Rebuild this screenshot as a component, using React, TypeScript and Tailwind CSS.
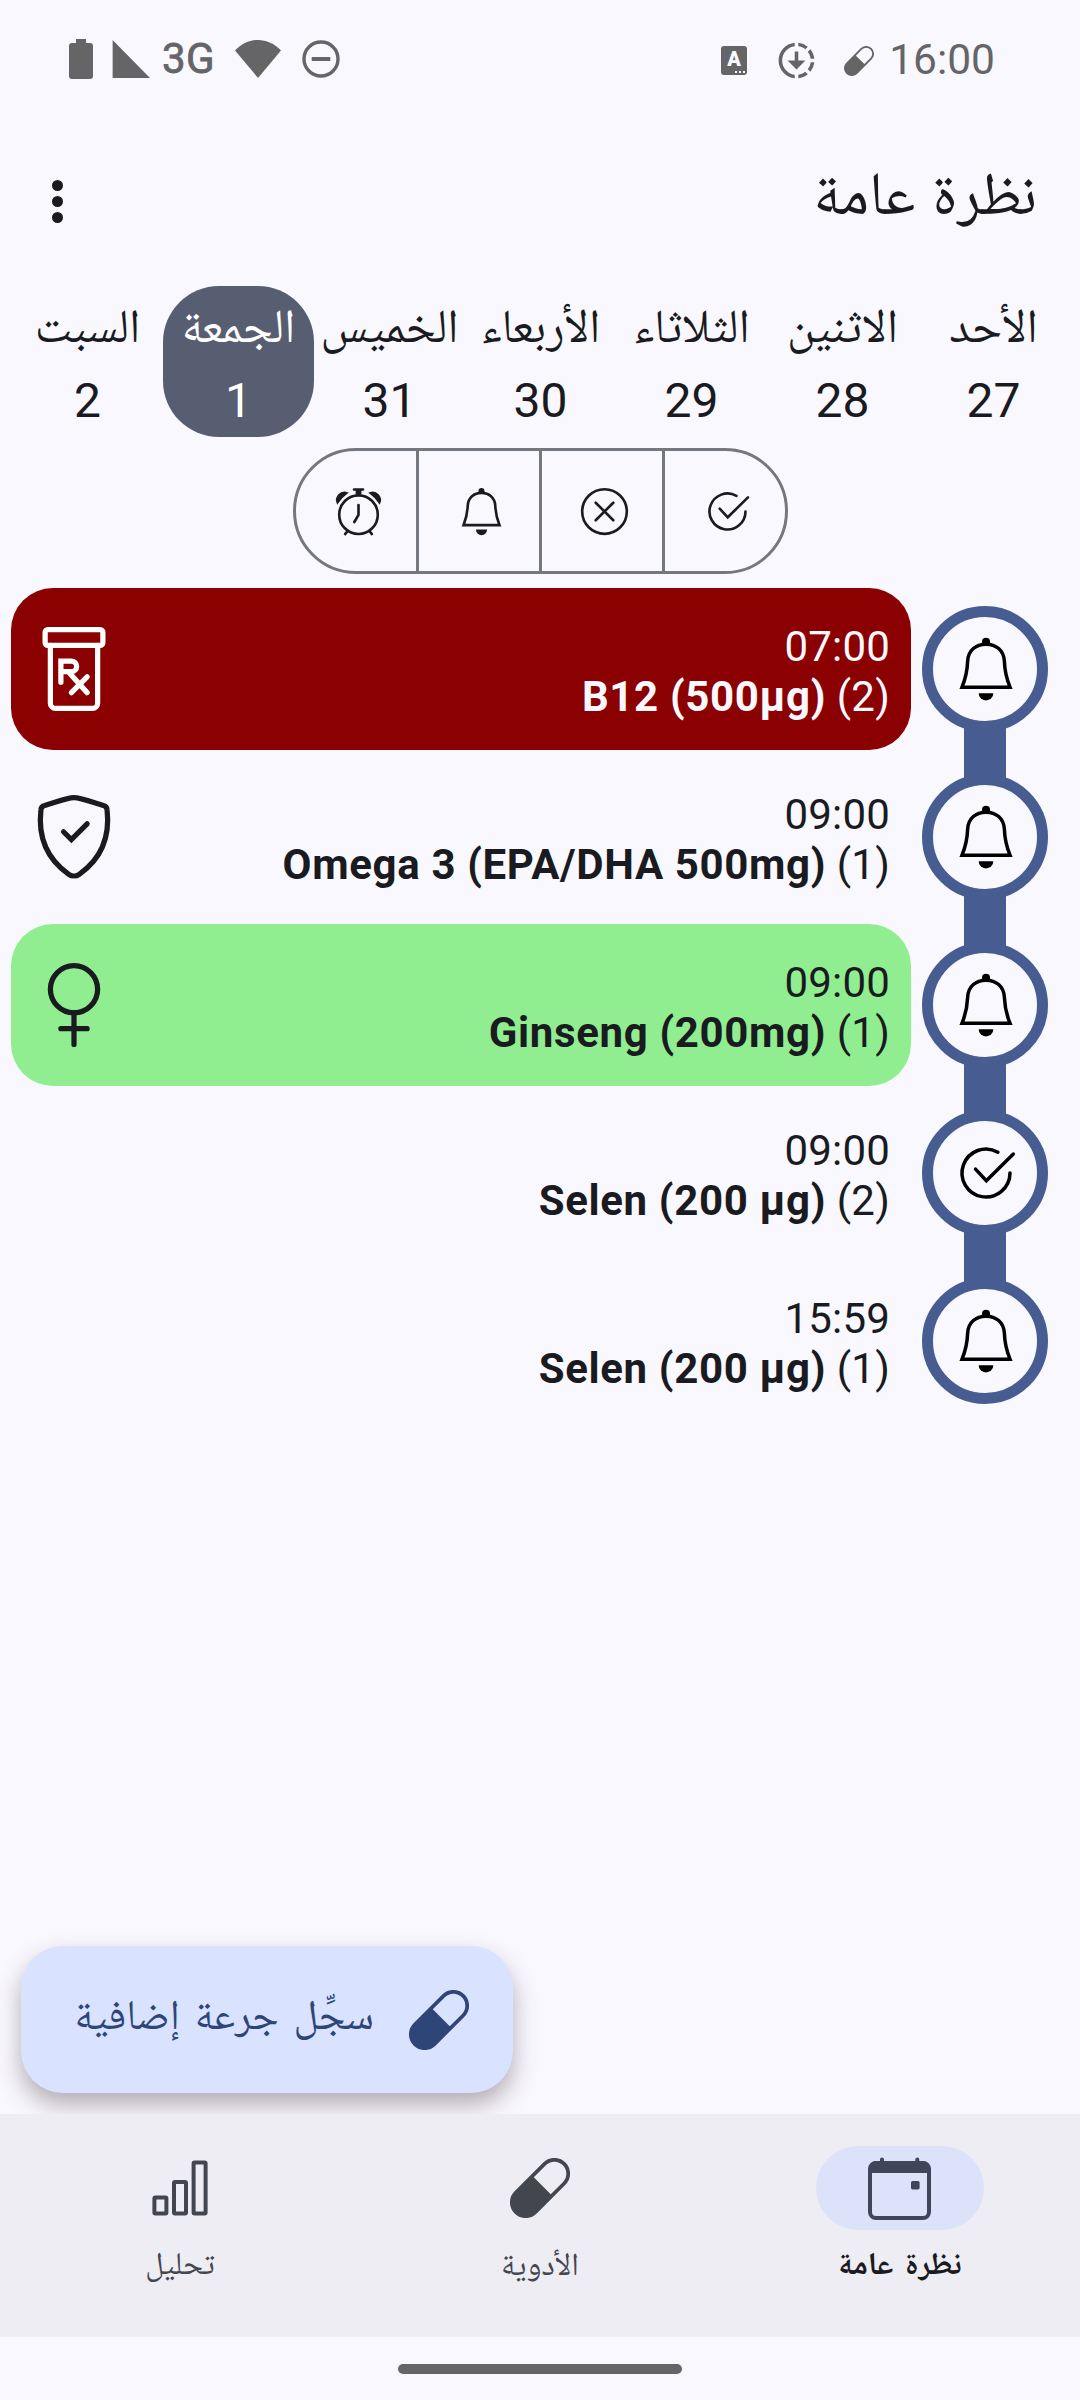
import type { ReactNode } from 'react';
import { MdDownloading } from 'react-icons/md';

type IconProps = { className?: string };

function Capsule({ className }: IconProps) {
  return (
    <svg viewBox="-30 -30 60 60" className={className} fill="currentColor">
      <path
        transform="rotate(-45)"
        fillRule="evenodd"
        d="M-20.3 -15.7H20.3a15.7 15.7 0 0 1 0 31.4H-20.3a15.7 15.7 0 0 1 0 -31.4zM3.2 -12V12H20.3a12 12 0 0 0 0 -24z"
      />
    </svg>
  );
}

function Bell({ className }: IconProps) {
  return (
    <svg viewBox="0 0 24 24" className={className} fill="none" stroke="currentColor" strokeWidth="1">
      <path d="M5.15 17.2H18.85C17.8 14.6 17.35 12.5 17.25 9.8C17.1 6.6 14.8 4.9 12 4.9S6.9 6.6 6.75 9.8C6.65 12.5 6.2 14.6 5.15 17.2z" />
      <path d="M10.85 4.9V4.2a1.15 1.15 0 0 1 2.3 0V4.9z" fill="currentColor" stroke="none" />
      <path d="M9.9 18.9h4.2a2.1 2.1 0 0 1 -4.2 0z" fill="currentColor" stroke="none" />
    </svg>
  );
}

function CheckCircle({ className }: IconProps) {
  return (
    <svg viewBox="0 0 24 24" className={className} fill="none" stroke="currentColor" strokeWidth="1" strokeLinecap="round">
      <path d="M15.4 6.05A6.85 6.85 0 1 0 18.85 12" />
      <path d="M9 10.9L12.1 14.2L19.8 6.6" />
    </svg>
  );
}

function CrossCircle({ className }: IconProps) {
  return (
    <svg viewBox="0 0 24 24" className={className} fill="none" stroke="currentColor" strokeWidth="1" strokeLinecap="round">
      <circle cx="12" cy="12" r="8.5" />
      <path d="M8.65 8.65L15.35 15.35M15.35 8.65L8.65 15.35" />
    </svg>
  );
}

function AlarmClock({ className }: IconProps) {
  return (
    <svg viewBox="0 0 24 24" className={className} fill="none" stroke="currentColor" strokeWidth="1" strokeLinecap="round">
      <circle cx="12" cy="13.2" r="7.35" />
      <path d="M12 9.5V13.3L10.4 16" />
      <path d="M10.3 3.6H13.7" />
      <path d="M10.9 3.5H13.1V5.6H10.9z" fill="currentColor" stroke="none" />
      <path d="M7.7 19.6L6.9 20.6M16.3 19.6L17.1 20.6" />
      <path d="M4 8.8A2.9 2.9 0 0 1 7.7 4.9Q5.6 6.4 4 8.8zM20 8.8A2.9 2.9 0 0 0 16.3 4.9Q18.4 6.4 20 8.8z" fill="currentColor" strokeWidth=".6" />
    </svg>
  );
}

function RxBottle({ className }: IconProps) {
  return (
    <svg viewBox="0 0 24 24" className={className} fill="none" stroke="currentColor" strokeWidth="1" strokeLinecap="round">
      <rect x="6.5" y="4.5" width="11" height="3" rx=".5" />
      <path d="M7.5 7.5V18.5a1 1 0 0 0 1 1H15.5a1 1 0 0 0 1 -1V7.5" />
      <path d="M9.5 14.5V10.5H11.5a1 1 0 0 1 0 2H9.7M11 12.6L14.5 16.5M14.5 13.5L11.5 16.5" />
    </svg>
  );
}

function Shield({ className }: IconProps) {
  return (
    <svg viewBox="0 0 24 24" className={className} fill="none" stroke="currentColor" strokeWidth="1" strokeLinecap="round">
      <path d="M12 4.5C13.3 4.5 15.8 5.5 17.6 6a.9 .9 0 0 1 .7 .8C18.9 12.1 17.1 16.2 13 19.1a1.7 1.7 0 0 1 -2 0C6.9 16.2 5.1 12.1 5.7 6.8a.9 .9 0 0 1 .7 -.8C8.2 5.5 10.7 4.5 12 4.5z" />
      <path d="M10 11L11.5 12.5L14.5 9.5" />
    </svg>
  );
}

function Female({ className }: IconProps) {
  return (
    <svg viewBox="0 0 24 24" className={className} fill="none" stroke="currentColor" strokeWidth="1" strokeLinecap="round">
      <circle cx="12" cy="9" r="4.5" />
      <path d="M12 13.5V19.5M9.5 16.5H14.5" />
    </svg>
  );
}

function CalendarIcon() {
  return (
    <svg viewBox="0 0 63 63" className="mr-[1px] size-[63px]" fill="none">
      <rect x="2" y="6" width="59" height="55" rx="6" stroke="currentColor" strokeWidth="4" />
      <path d="M2 16V10a6 6 0 0 1 6 -6H55a6 6 0 0 1 6 6V16z" fill="currentColor" />
      <path d="M14 4V2.4M49.3 4V2.4" stroke="currentColor" strokeWidth="4" strokeLinecap="round" />
      <rect x="43" y="24" width="8.6" height="8.4" rx="1.6" fill="currentColor" />
    </svg>
  );
}

function BarsIcon() {
  return (
    <svg viewBox="0 0 56 56" className="size-[56px]" fill="none" stroke="currentColor" strokeWidth="4">
      <rect x="2.4" y="37.6" width="12" height="16" rx="1" />
      <rect x="22" y="22" width="12" height="31.6" rx="1" />
      <rect x="41.6" y="2.4" width="12" height="51.2" rx="1" />
    </svg>
  );
}

const days = [
  { name: 'الأحد', num: 27 },
  { name: 'الاثنين', num: 28 },
  { name: 'الثلاثاء', num: 29 },
  { name: 'الأربعاء', num: 30 },
  { name: 'الخميس', num: 31 },
  { name: 'الجمعة', num: 1, selected: true },
  { name: 'السبت', num: 2 },
];

type Dose = { time: string; name: string; amount: number; tone: string; icon?: ReactNode; taken?: boolean };

const doses: Dose[] = [
  { time: '07:00', name: 'B12 (500µg)', amount: 2, tone: 'bg-[#8b0000] text-[#faf8ff]', icon: <RxBottle className="size-[126px] text-white" /> },
  { time: '09:00', name: 'Omega 3 (EPA/DHA 500mg)', amount: 1, tone: '', icon: <Shield className="size-[126px]" /> },
  { time: '09:00', name: 'Ginseng (200mg)', amount: 1, tone: 'bg-[#90ee90]', icon: <Female className="size-[126px]" /> },
  { time: '09:00', name: 'Selen (200 µg)', amount: 2, tone: '', taken: true },
  { time: '15:59', name: 'Selen (200 µg)', amount: 1, tone: '' },
];

function StatusBar() {
  return (
    <header dir="ltr" className="flex h-[118px] items-center justify-between pr-[85px] pl-[69px] text-[#656567]">
      <div className="flex items-center">
        <svg viewBox="0 0 24 40" className="h-10 w-6" fill="currentColor">
          <path d="M7 0H17V4H21a3 3 0 0 1 3 3V37a3 3 0 0 1 -3 3H3a3 3 0 0 1 -3 -3V7a3 3 0 0 1 3 -3H7z" />
        </svg>
        <svg viewBox="0 0 38 38" className="ml-[19px] size-[38px]" fill="currentColor">
          <path d="M.6 0V38H38z" />
        </svg>
        <span className="ml-[12px] w-[54px] text-[42px] leading-none tracking-[0.4px] [-webkit-text-stroke:0.8px]">3G</span>
        <svg viewBox="0 0 46 38" className="ml-[19px] h-[38px] w-[46px]" fill="currentColor">
          <path d="M23 38L0 10.5C13 -3.5 33 -3.5 46 10.5z" />
        </svg>
        <svg viewBox="0 0 38 38" className="ml-[21px] size-[38px]" fill="none" stroke="currentColor">
          <circle cx="19" cy="19" r="17" strokeWidth="3.4" />
          <path d="M9.7 19H28.3" strokeWidth="4" />
        </svg>
      </div>
      <div className="flex items-center">
        <div className="relative mt-[2px] flex h-[29px] w-[26px] items-center justify-center rounded-[3px] bg-[#656567]">
          <span className="-mt-[2px] text-[20px] leading-none font-black text-[#faf8ff]">A</span>
          <div className="absolute right-[2px] bottom-[2px] flex gap-[2px]">
            <i className="size-[2px] bg-[#faf8ff]" />
            <i className="size-[2px] bg-[#faf8ff]" />
            <i className="size-[2px] bg-[#faf8ff]" />
          </div>
        </div>
        <MdDownloading className="mt-[2px] ml-[28px] size-[43px]" />
        <Capsule className="mt-[3px] ml-[26px] size-[30px]" />
        <span className="mt-[2px] ml-[15px] text-[42.5px] leading-none">16:00</span>
      </div>
    </header>
  );
}

export default function App() {
  return (
    <div dir="rtl" className="flex h-[2400px] w-[1080px] flex-col overflow-hidden bg-[#faf8ff] font-['Roboto','Noto_Naskh_Arabic',sans-serif] text-[#1a1b21]">
      <StatusBar />

      <div className="flex h-[168px] items-center justify-between pr-[43px] pl-[52px]">
        <h1 className="pb-[18px] text-[61px] leading-[80px] [word-spacing:2px]">نظرة عامة</h1>
        <div className="flex flex-col gap-[5px] pb-[1px]">
          <i className="size-[11px] rounded-full bg-current" />
          <i className="size-[11px] rounded-full bg-current" />
          <i className="size-[11px] rounded-full bg-current" />
        </div>
      </div>

      <div className="flex h-[151px] pr-[11px]">
        {days.map((d) => (
          <div
            key={d.num}
            className={`flex w-[151px] flex-col items-center pt-[10px] ${d.selected ? 'rounded-[56px] bg-[#585e71] text-white' : ''}`}
          >
            <span className="text-[47.5px] leading-[60px] whitespace-nowrap">{d.name}</span>
            <span className="mt-[15px] text-[48px] leading-[60px]">{d.num}</span>
          </div>
        ))}
      </div>

      <div dir="ltr" className="mt-[11px] mr-[292px] flex h-[126px] w-[495px] rounded-full border-[3px] border-[#757780]">
        <div className="flex w-[120px] items-center justify-center pl-[5px]"><AlarmClock className="size-[63px]" /></div>
        <div className="flex w-[123px] items-center justify-center border-l-[3px] border-[#757780] pl-[5px]"><Bell className="size-[63px]" /></div>
        <div className="flex w-[123px] items-center justify-center border-l-[3px] border-[#757780] pl-[5px]"><CrossCircle className="size-[63px]" /></div>
        <div className="flex w-[123px] items-center justify-center border-l-[3px] border-[#757780] pl-[5px]"><CheckCircle className="size-[63px]" /></div>
      </div>

      <main className="mt-[14px] flex flex-col gap-[6px]">
        {doses.map((d, i) => (
          <div key={i} className="flex h-[162px] items-center justify-between pr-8 pl-[11px]">
            <div className="relative">
              {i > 0 && <div className="absolute bottom-[115px] left-[42px] h-[63px] w-[42px] bg-[#475d92]" />}
              <div className="flex size-[126px] items-center justify-center rounded-full border-[11px] border-[#475d92] pl-[1px] text-black">
                {d.taken ? <CheckCircle className="size-[84px]" /> : <Bell className="size-[84px]" />}
              </div>
            </div>
            <div className={`flex h-full w-[900px] items-center justify-between rounded-[42px] pr-[21px] ${d.tone}`}>
              <div dir="ltr" className="pt-[5px] text-right text-[42px] leading-[50px] tracking-[0.2px]">
                <p>{d.time}</p>
                <p><b className="tracking-[0.65px]">{d.name}</b> ({d.amount})</p>
              </div>
              {d.icon}
            </div>
          </div>
        ))}
      </main>

      <div className="flex flex-1 flex-col items-end justify-end overflow-hidden pb-[21px] pl-[21px]">
        <button className="flex h-[147px] w-[492px] items-center rounded-[42px] bg-[#d9e2ff] pr-[44px] text-[#2e4578] shadow-[0_12px_24px_rgba(60,50,50,0.38)]">
          <Capsule className="size-[60px]" />
          <span className="mr-[35px] pb-[10px] text-[42px] leading-[60px] whitespace-nowrap [word-spacing:4.5px]">سجِّل جرعة إضافية</span>
        </button>
      </div>

      <nav className="flex h-[223px] bg-[#eeedf4] text-[#44464f]">
        <div className="flex flex-1 flex-col items-center pt-8">
          <div className="flex h-[84px] w-[168px] items-center justify-center rounded-full bg-[#dce2f9] text-[#404659]"><CalendarIcon /></div>
          <span className="mt-[14px] text-[31.5px] leading-[40px] font-bold text-[#1a1b21] [word-spacing:4px]">نظرة عامة</span>
        </div>
        <div className="flex flex-1 flex-col items-center pt-8">
          <div className="flex h-[84px] w-[168px] items-center justify-center"><Capsule className="size-[60px]" /></div>
          <span className="mt-[14px] text-[32px] leading-[40px]">الأدوية</span>
        </div>
        <div className="flex flex-1 flex-col items-center pt-8">
          <div className="flex h-[84px] w-[168px] items-center justify-center"><BarsIcon /></div>
          <span className="mt-[14px] text-[31.5px] leading-[40px]">تحليل</span>
        </div>
      </nav>
      <div className="flex h-[63px] justify-center pt-[27px]">
        <div className="h-[10px] w-[284px] rounded-full bg-[#656567]" />
      </div>
    </div>
  );
}
